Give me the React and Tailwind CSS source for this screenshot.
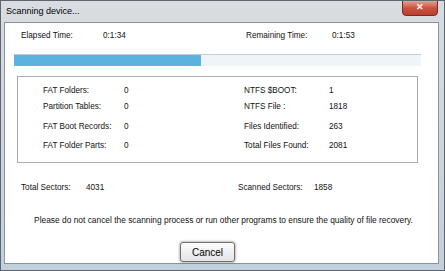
import React from "react";

const font = { fontFamily: '"Liberation Sans", Arial, sans-serif' };

function StatRow({ left, leftVal, right, rightVal, className = "" }) {
  return (
    <div className={"flex h-[16px] items-center pl-[25px] " + className}>
      <span className="w-[81px]">{left}</span>
      <span className="w-[120px]">{leftVal}</span>
      <span className="w-[85px]">{right}</span>
      <span>{rightVal}</span>
    </div>
  );
}

export default function App() {
  return (
    <div
      className="w-[445px] h-[271px] flex flex-col bg-gradient-to-b from-[#d9dde2] via-[#cfd5db] to-[#c3cfdc] border border-[#5d6670] text-[#111] overflow-hidden"
      style={font}
    >
      {/* title bar */}
      <div className="flex h-[21px] items-start justify-between">
        <span className="pl-[5px] pt-[6px] text-[9px] leading-none text-black">Scanning device...</span>
        <button className="mr-[6px] -mt-px flex h-[16px] w-[36px] items-center justify-center rounded-b-[4px] border border-[#7a2a22] bg-gradient-to-b from-[#e2a296] via-[#c9523f] to-[#b8412f] text-[9px] font-bold text-white">
          ✕
        </button>
      </div>

      {/* client area */}
      <div className="ml-[3px] mr-[5px] h-[242px] flex flex-col border border-[#8b949d] bg-white text-[8.2px]">
        {/* times */}
        <div className="flex h-[25px] items-center pl-[16px] pt-px">
          <span className="w-[82px]">Elapsed Time:</span>
          <span className="w-[143px]">0:1:34</span>
          <span className="w-[86px]">Remaining Time:</span>
          <span>0:1:53</span>
        </div>

        {/* progress */}
        <div className="ml-[9px] mt-[6px] h-[12px] w-[407px] flex border-t border-[#c5ccd2] bg-[#eef4f8]">
          <div className="h-full bg-[#5cb2df]" style={{ width: "187px" }} />
        </div>

        {/* stats box */}
        <div className="ml-[12px] mt-[10px] h-[87px] w-[401px] border border-[#a7aeb5] flex flex-col">
          <StatRow className="mt-[6px]" left="FAT Folders:" leftVal="0" right="NTFS $BOOT:" rightVal="1" />
          <StatRow left="Partition Tables:" leftVal="0" right="NTFS File :" rightVal="1818" />
          <StatRow className="mt-[4px]" left="FAT Boot Records:" leftVal="0" right="Files Identified:" rightVal="263" />
          <StatRow className="mt-[3px]" left="FAT Folder Parts:" leftVal="0" right="Total Files Found:" rightVal="2081" />
        </div>

        {/* sectors */}
        <div className="mt-[17px] flex h-[16px] items-center pl-[16px]">
          <span className="w-[65px]">Total Sectors:</span>
          <span className="w-[152px]">4031</span>
          <span className="w-[76px]">Scanned Sectors:</span>
          <span>1858</span>
        </div>

        {/* notice */}
        <div className="mt-[16px] flex h-[16px] items-center justify-center pl-[4px] text-[8.4px]">
          Please do not cancel the scanning process or run other programs to ensure the quality of file recovery.
        </div>

        {/* cancel */}
        <div className="mt-[14px] pl-[175px]">
          <button className="h-[20px] w-[55px] rounded-[3px] border border-[#6f6f6f] bg-gradient-to-b from-[#fdfdfd] to-[#e4e4e4] text-[10px] text-black shadow-[0_0_2px_1px_rgba(0,0,0,0.25)]">
            Cancel
          </button>
        </div>
      </div>
    </div>
  );
}
